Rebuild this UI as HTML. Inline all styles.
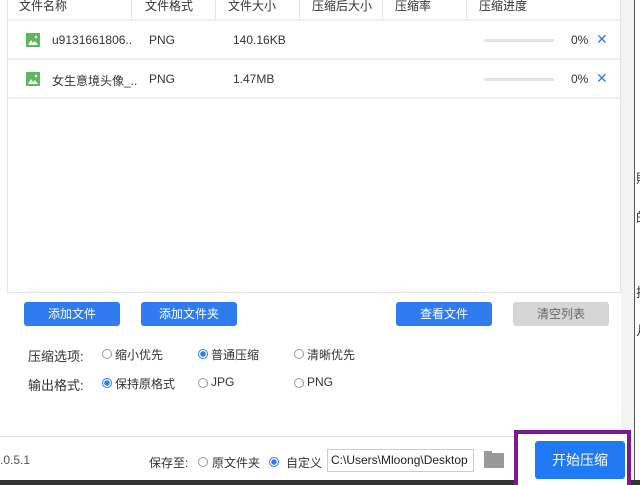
<html><head><style>
body{margin:0;width:640px;height:485px;position:relative;overflow:hidden;background:#fff;font-family:"Liberation Sans","Noto Sans CJK SC",sans-serif;font-size:12px;color:#333}
.a{position:absolute}
.th{position:absolute;top:0;height:20px;line-height:12px;font-size:12px;color:#333}
.sep{position:absolute;top:0;height:19px;width:1px;background:#e5e5e5}
.btn{position:absolute;height:24px;line-height:24px;text-align:center;color:#fff;background:#2f7bf0;border-radius:3px;font-size:12px}
.rad{position:absolute;width:8px;height:8px;border:1px solid #999;border-radius:50%}
.rad.on{border-color:#2f7bf0;background:radial-gradient(#2f7bf0 0 2.5px,#fff 3px)}
.ic{position:absolute;width:14px;height:14px}
.bar{position:absolute;width:70px;height:3px;background:#e3e3e3;border-radius:2px}
</style></head><body>
<div class="a" style="left:7px;top:0;width:614px;height:293px;border:1px solid #e6e6e6;border-top:none;box-sizing:border-box"></div>
<div class="th" style="left:19px">文件名称</div>
<div class="th" style="left:145px">文件格式</div>
<div class="th" style="left:228px">文件大小</div>
<div class="th" style="left:312px">压缩后大小</div>
<div class="th" style="left:395px">压缩率</div>
<div class="th" style="left:479px">压缩进度</div>
<div class="sep" style="left:131px"></div><div class="sep" style="left:215px"></div><div class="sep" style="left:299px"></div><div class="sep" style="left:382px"></div><div class="sep" style="left:466px"></div>
<div class="a" style="left:8px;top:19px;width:612px;height:2px;background:#eee"></div>
<div class="a" style="left:8px;top:58px;width:612px;height:2px;background:#eee"></div>
<div class="a" style="left:8px;top:97px;width:612px;height:2px;background:#eee"></div>
<svg class="ic" style="left:26px;top:33px" viewBox="0 0 14 14"><rect width="14" height="14" fill="#5cb85c"/><path d="M2 12 L5 7 L7 10 L9 8 L12 12 Z" fill="#fff"/><circle cx="10" cy="4" r="1.3" fill="#fff"/></svg>
<svg class="ic" style="left:26px;top:72px" viewBox="0 0 14 14"><rect width="14" height="14" fill="#5cb85c"/><path d="M2 12 L5 7 L7 10 L9 8 L12 12 Z" fill="#fff"/><circle cx="10" cy="4" r="1.3" fill="#fff"/></svg>
<div class="a" style="left:52px;top:33px">u9131661806..</div>
<div class="a" style="left:149px;top:33px">PNG</div>
<div class="a" style="left:233px;top:33px">140.16KB</div>
<div class="bar" style="left:484px;top:39px"></div>
<div class="a" style="left:571px;top:33px">0%</div>
<div class="a" style="left:596px;top:31px;color:#2f7bf0;font-size:14px">✕</div>
<div class="a" style="left:52px;top:72px">女生意境头像_..</div>
<div class="a" style="left:149px;top:72px">PNG</div>
<div class="a" style="left:233px;top:72px">1.47MB</div>
<div class="bar" style="left:484px;top:78px"></div>
<div class="a" style="left:571px;top:72px">0%</div>
<div class="a" style="left:596px;top:70px;color:#2f7bf0;font-size:14px">✕</div>
<div class="a" style="left:621px;top:0;width:13px;height:485px;background:#f3f3f3"></div>
<div class="a" style="left:634px;top:0;width:1px;height:485px;background:#555"></div>
<div class="a" style="left:636px;top:168px;font-size:13px">則</div>
<div class="a" style="left:636px;top:207px;font-size:13px">的</div>
<div class="a" style="left:636px;top:282px;font-size:13px">挂</div>
<div class="a" style="left:636px;top:320px;font-size:13px">几</div>
<div class="btn" style="left:24px;top:302px;width:96px">添加文件</div>
<div class="btn" style="left:141px;top:302px;width:96px">添加文件夹</div>
<div class="btn" style="left:396px;top:302px;width:96px">查看文件</div>
<div class="btn" style="left:513px;top:302px;width:96px;background:#d6d6d6;color:#666">清空列表</div>
<div class="a" style="left:28px;top:346px;font-size:13px">压缩选项:</div>
<div class="rad" style="left:102px;top:349px"></div><div class="a" style="left:115px;top:346px">缩小优先</div>
<div class="rad on" style="left:198px;top:349px"></div><div class="a" style="left:211px;top:346px">普通压缩</div>
<div class="rad" style="left:294px;top:349px"></div><div class="a" style="left:307px;top:346px">清晰优先</div>
<div class="a" style="left:28px;top:375px;font-size:13px">输出格式:</div>
<div class="rad on" style="left:102px;top:378px"></div><div class="a" style="left:115px;top:375px">保持原格式</div>
<div class="rad" style="left:198px;top:378px"></div><div class="a" style="left:211px;top:375px">JPG</div>
<div class="rad" style="left:294px;top:378px"></div><div class="a" style="left:307px;top:375px">PNG</div>
<div class="a" style="left:0;top:436px;width:621px;height:1px;background:#e3e3e3"></div>
<div class="a" style="left:0;top:453px;color:#555">.0.5.1</div>
<div class="a" style="left:149px;top:454px">保存至:</div>
<div class="rad" style="left:198px;top:457px"></div><div class="a" style="left:212px;top:454px">原文件夹</div>
<div class="rad on" style="left:269px;top:457px"></div><div class="a" style="left:286px;top:454px">自定义</div>
<div class="a" style="left:327px;top:449px;width:147px;height:23px;border:1px solid #ccc;box-sizing:border-box;line-height:21px;padding-left:3px;overflow:hidden;white-space:nowrap;color:#222;font-size:12px">C:\Users\Mloong\Desktop</div>
<div class="a" style="left:484px;top:453px;width:20px;height:15px;background:#999;border-radius:1px"></div>
<div class="a" style="left:484px;top:451px;width:8px;height:3px;background:#999"></div>
<div class="a" style="left:0;top:480px;width:640px;height:5px;background:#333"></div>
<div class="a" style="left:514px;top:430px;width:117px;height:55px;box-sizing:border-box;border:4px solid #7a1a8c;border-bottom:none;background:#fff"></div>
<div class="btn" style="left:535px;top:441px;width:90px;height:38px;line-height:38px;font-size:14px;background:#2079f5;border-radius:3px">开始压缩</div>
</body></html>
